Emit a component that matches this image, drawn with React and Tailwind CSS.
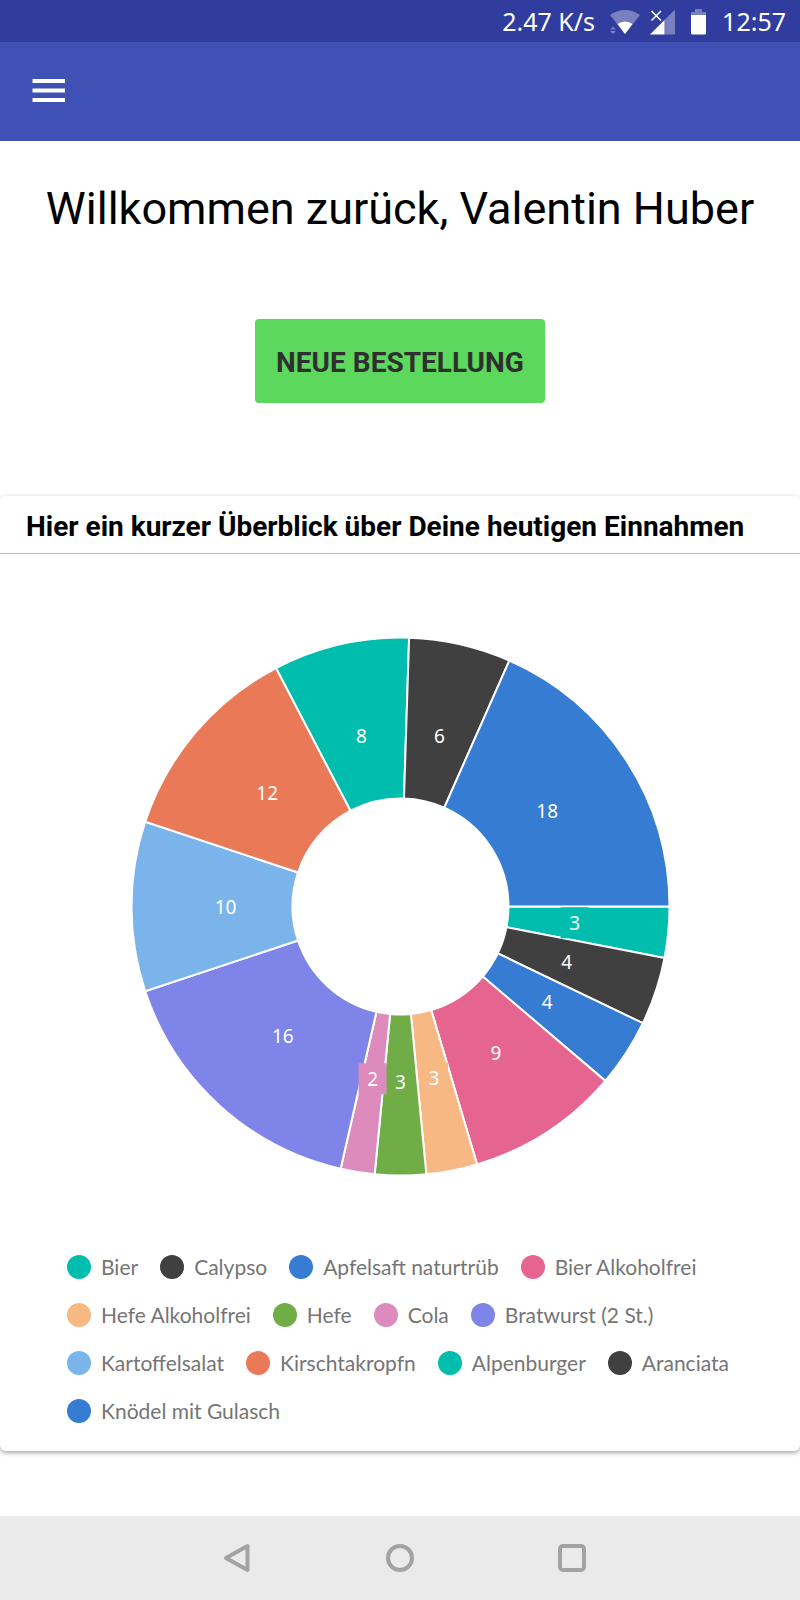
const ITEMS = [
  { name: 'Bier', value: 3, color: '#00bdae' },
  { name: 'Calypso', value: 4, color: '#404041' },
  { name: 'Apfelsaft naturtrüb', value: 4, color: '#357cd2' },
  { name: 'Bier Alkoholfrei', value: 9, color: '#e56590' },
  { name: 'Hefe Alkoholfrei', value: 3, color: '#f8b883' },
  { name: 'Hefe', value: 3, color: '#70ad47' },
  { name: 'Cola', value: 2, color: '#dd8abd' },
  { name: 'Bratwurst (2 St.)', value: 16, color: '#7f84e8' },
  { name: 'Kartoffelsalat', value: 10, color: '#7bb4eb' },
  { name: 'Kirschtakropfn', value: 12, color: '#ea7a57' },
  { name: 'Alpenburger', value: 8, color: '#00bdae' },
  { name: 'Aranciata', value: 6, color: '#404041' },
  { name: 'Knödel mit Gulasch', value: 18, color: '#357cd2' },
];

const CX = 400.5;
const CY = 352.5;
const OUTER = 269;
const INNER = 108;
const LABEL = 175;

const point = (radius, angle) => [
  CX + radius * Math.cos(angle),
  CY + radius * Math.sin(angle),
];

function buildSlices(items) {
  const total = items.reduce((sum, item) => sum + item.value, 0);
  let angle = 0;
  return items.map((item) => {
    const start = angle;
    const end = start + (item.value / total) * Math.PI * 2;
    angle = end;
    const large = end - start > Math.PI ? 1 : 0;
    const d = [
      `M${point(OUTER, start)}`,
      `A${OUTER},${OUTER} 0 ${large} 1 ${point(OUTER, end)}`,
      `L${point(INNER, end)}`,
      `A${INNER},${INNER} 0 ${large} 0 ${point(INNER, start)}`,
      'Z',
    ].join(' ');
    return { ...item, d, label: point(LABEL, (start + end) / 2) };
  });
}

function StatusBar() {
  return (
    <div className="flex h-[42px] items-center justify-end bg-[#303d9e] pt-px pr-[14px] font-['Noto_Sans',sans-serif] text-[25px] text-white">
      <span>2.47 K/s</span>
      <svg className="ml-[14px] h-[26px] w-8" viewBox="0 0 32 26" aria-hidden="true">
        <path d="M1 6Q16-4 31 6L16 25Z" fill="#fff" fillOpacity=".35" />
        <path d="M8.5 15Q16 10 23.500 15L16 25Z" fill="#fff" />
        <path d="M1 20.500L4 17.500L7 20.500ZM1 22L4 25L7 22Z" fill="#fff" fillOpacity=".35" />
      </svg>
      <svg className="ml-[9px] h-[26px] w-[26px]" viewBox="0 0 26 26" aria-hidden="true">
        <path d="M14.500 11L25 .5V25.500H14.500Z" fill="#fff" fillOpacity=".35" />
        <path d="M0 25.500L14.500 11V25.500Z" fill="#fff" />
        <path d="M1.500 2L11 11.500M11 2L1.500 11.500" stroke="#303d9e" strokeWidth="4" />
        <path d="M1.500 2L11 11.500M11 2L1.500 11.500" stroke="#fff" strokeWidth="1.500" />
      </svg>
      <svg className="ml-[15px] h-[26px] w-[15px]" viewBox="0 0 15 26" aria-hidden="true">
        <path d="M4 0H11V3H15V6H0V3H4Z" fill="#fff" fillOpacity=".35" />
        <path d="M0 6H15V24a1.500 1.500 0 0 1-1.500 1.500H1.500A1.500 1.500 0 0 1 0 24Z" fill="#fff" />
      </svg>
      <span className="ml-4">12:57</span>
    </div>
  );
}

function DonutChart() {
  const slices = buildSlices(ITEMS);
  return (
    <svg className="block w-full" viewBox="0 0 800 689" role="img" aria-label="Einnahmen nach Artikel">
      {slices.map((s) => (
        <path key={s.name} d={s.d} fill={s.color} stroke="#fff" strokeWidth="2" />
      ))}
      {slices.map((s) => (
        <g key={s.name}>
          <rect x={s.label[0] - 14} y={s.label[1] - 16} width="28" height="31" fill={s.color} />
          <text
            x={s.label[0]}
            y={s.label[1] + 7}
            textAnchor="middle"
            fill="#fff"
            className="font-['Noto_Sans',sans-serif] text-[19px]"
          >
            {s.value}
          </text>
        </g>
      ))}
    </svg>
  );
}

function Legend() {
  return (
    <ul className="flex flex-wrap gap-x-[22px] pr-12 pb-4 pl-[67px] font-['Lato',sans-serif] text-[21px] text-[#757575]">
      {ITEMS.map((item) => (
        <li key={item.name} className="flex h-12 items-center gap-[10px] whitespace-nowrap">
          <span className="size-6 shrink-0 rounded-full" style={{ backgroundColor: item.color }} />
          {item.name}
        </li>
      ))}
    </ul>
  );
}

function NavigationBar() {
  return (
    <nav className="mt-auto flex h-[84px] items-center justify-center gap-[133px] bg-[#eaeaea] text-[#a3a3a3]">
      <button type="button" aria-label="Zurück" className="flex w-[39px] justify-end">
        <svg className="size-[30px]" viewBox="0 0 30 30" fill="none" stroke="currentColor" strokeWidth="4" strokeLinejoin="round">
          <path d="M25.500 3V27L4 15Z" />
        </svg>
      </button>
      <button type="button" aria-label="Startseite">
        <svg className="size-[30px]" viewBox="0 0 30 30" fill="none" stroke="currentColor" strokeWidth="4">
          <circle cx="15" cy="15" r="12" />
        </svg>
      </button>
      <button type="button" aria-label="Letzte Apps" className="ml-[9px]">
        <svg className="size-[30px]" viewBox="0 0 30 30" fill="none" stroke="currentColor" strokeWidth="4">
          <rect x="3" y="3" width="24" height="24" rx="3" />
        </svg>
      </button>
    </nav>
  );
}

export default function App() {
  return (
    <div className="flex min-h-screen flex-col bg-white font-['Roboto',sans-serif] text-black">
      <StatusBar />
      <header className="flex h-[99px] items-center bg-[#3f51b5] px-8 pb-0.5">
        <button type="button" aria-label="Menü" className="text-white">
          <svg className="block h-6 w-[34px]" viewBox="0 0 34 24" fill="currentColor">
            <path d="M.5 0H33V4H.5ZM.5 9.500H33V13.500H.5ZM.5 19H33V23H.5Z" />
          </svg>
        </button>
      </header>
      <main className="flex flex-col items-center">
        <h1 className="mt-10 text-center text-[45px] leading-[56px]">Willkommen zurück, Valentin Huber</h1>
        <button
          type="button"
          className="mt-[82px] h-[84px] rounded bg-[#5cd85c] px-[21px] pt-1 text-[28px] font-bold text-[#2f2f2f]"
        >
          NEUE BESTELLUNG
        </button>
        <section className="mt-[92px] w-full rounded-md border-t border-[#f3f3f3] shadow-[0_2px_4px_rgba(0,0,0,0.35)]">
          <h2 className="flex h-[58px] items-center border-b border-[#b8b8b8] px-[26px] pt-1 text-[28px] font-bold">
            Hier ein kurzer Überblick über Deine heutigen Einnahmen
          </h2>
          <DonutChart />
          <Legend />
        </section>
      </main>
      <NavigationBar />
    </div>
  );
}
